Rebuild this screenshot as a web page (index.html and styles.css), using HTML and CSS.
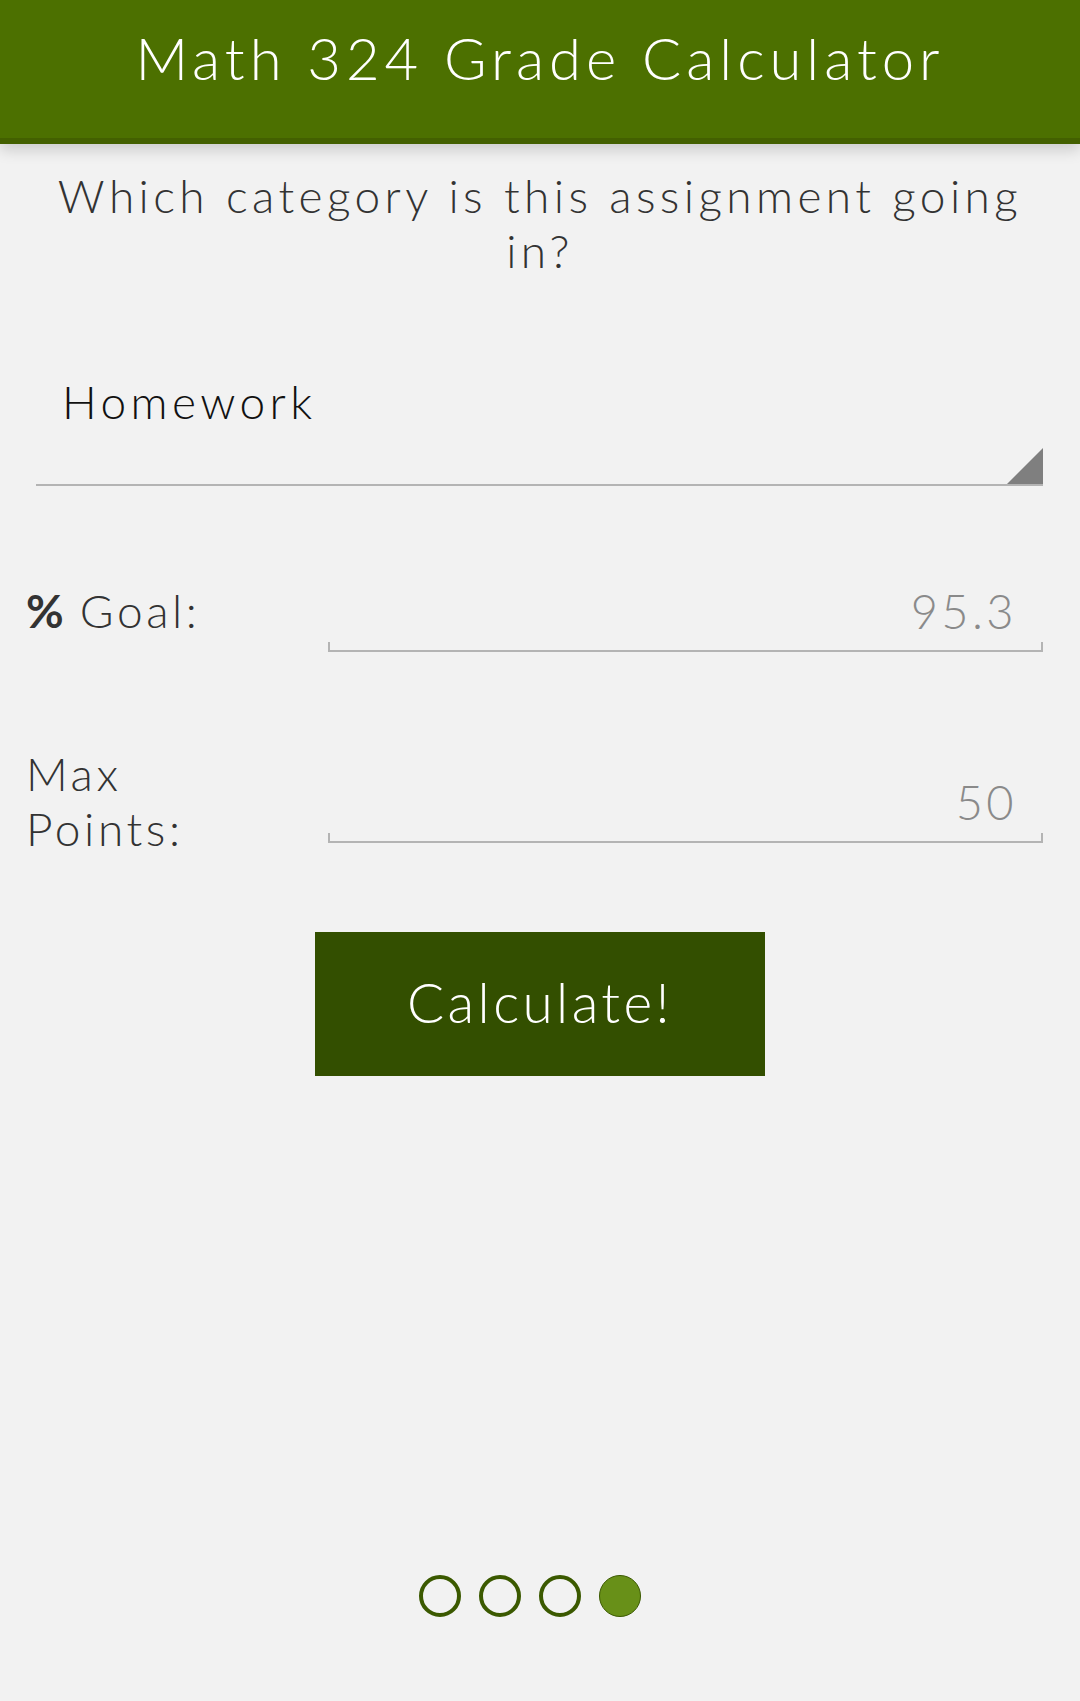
FILE: index.html
```html
<!DOCTYPE html>
<html lang="en">
<head>
<meta charset="utf-8">
<title>Math 324 Grade Calculator</title>
<link rel="stylesheet" href="styles.css">
</head>
<body>
<header class="appbar">
  <h1 class="appbar-title">Math 324 Grade Calculator</h1>
</header>
<main class="content">
  <p class="question">Which category is this assignment going in?</p>
  <div class="spinner">
    <span class="spinner-value">Homework</span>
    <span class="spinner-arrow"></span>
  </div>
  <div class="field-row row-goal">
    <label class="field-label"><b class="pct">%</b> Goal:</label>
    <div class="field">
      <div class="field-value">95.3</div>
      <div class="field-line"></div>
    </div>
  </div>
  <div class="field-row row-max">
    <label class="field-label">Max<br>Points:</label>
    <div class="field">
      <div class="field-value">50</div>
      <div class="field-line"></div>
    </div>
  </div>
  <div class="actions">
    <button class="calc-btn" type="button">Calculate!</button>
  </div>
</main>
<nav class="pager">
  <span class="dot"></span>
  <span class="dot"></span>
  <span class="dot"></span>
  <span class="dot active"></span>
</nav>
</body>
</html>
```

FILE: styles.css
```css
html, body {
  margin: 0;
  padding: 0;
}
body {
  background: #f2f2f2;
  font-family: "Lato", "Open Sans", sans-serif;
  font-weight: 300;
  color: #333;
  width: 1080px;
  height: 1701px;
  overflow: hidden;
}
.appbar {
  background: #4c7000;
  height: 138px;
  border-bottom: 6px solid #436000;
  box-shadow: 0 6px 14px rgba(0, 0, 0, 0.16);
  position: relative;
  z-index: 1;
}
.appbar-title {
  margin: 0;
  padding-top: 23px;
  font-size: 58px;
  line-height: 70px;
  font-weight: 300;
  color: #ffffff;
  text-align: center;
  letter-spacing: 5px;
}
.content {
  display: flex;
  flex-direction: column;
}
.question {
  margin: 24px 30px 0;
  font-size: 46px;
  line-height: 55px;
  text-align: center;
  color: #333;
  letter-spacing: 4.4px;
}
.spinner {
  position: relative;
  margin: 96px 37px 0 36px;
  padding: 0 0 55px 26px;
  border-bottom: 2px solid #b4b4b4;
}
.spinner-value {
  display: block;
  font-size: 46px;
  line-height: 55px;
  color: #111;
  letter-spacing: 4.4px;
}
.spinner-arrow {
  position: absolute;
  right: 0;
  bottom: 0;
  width: 36px;
  height: 36px;
  background: #7f7f7f;
  clip-path: polygon(100% 0, 100% 100%, 0 100%);
}
.field-row {
  display: flex;
  align-items: center;
  margin-right: 37px;
}
.row-goal {
  margin-top: 82px;
}
.row-max {
  margin-top: 94px;
}
.field-label {
  width: 328px;
  padding-left: 26px;
  box-sizing: border-box;
  font-size: 46px;
  line-height: 55px;
  color: #333;
  letter-spacing: 3.6px;
}
.pct {
  font-weight: 700;
  letter-spacing: 0;
}
.field {
  flex: 1;
  padding-top: 16px;
}
.field-value {
  font-size: 47px;
  line-height: 55px;
  text-align: right;
  padding-right: 26px;
  color: #8a8a8a;
  letter-spacing: 3.4px;
}
.field-line {
  margin-top: 3px;
  height: 8px;
  border: 2px solid #b4b4b4;
  border-top: none;
}
.actions {
  display: flex;
  justify-content: center;
  margin-top: 76px;
}
.calc-btn {
  width: 450px;
  height: 144px;
  border: none;
  border-radius: 0;
  background: #334f00;
  color: #ffffff;
  font-family: "Lato", "Open Sans", sans-serif;
  font-weight: 300;
  font-size: 55px;
  letter-spacing: 3.4px;
  padding: 0 0 4px;
}
.pager {
  position: absolute;
  top: 1575px;
  left: 0;
  right: 0;
  display: flex;
  justify-content: center;
  gap: 18px;
  padding-right: 20px;
}
.dot {
  width: 42px;
  height: 42px;
  box-sizing: border-box;
  border-radius: 50%;
  border: 4px solid #3b5900;
}
.dot.active {
  background: #689018;
  border: 1.5px solid #3b5900;
}
```
